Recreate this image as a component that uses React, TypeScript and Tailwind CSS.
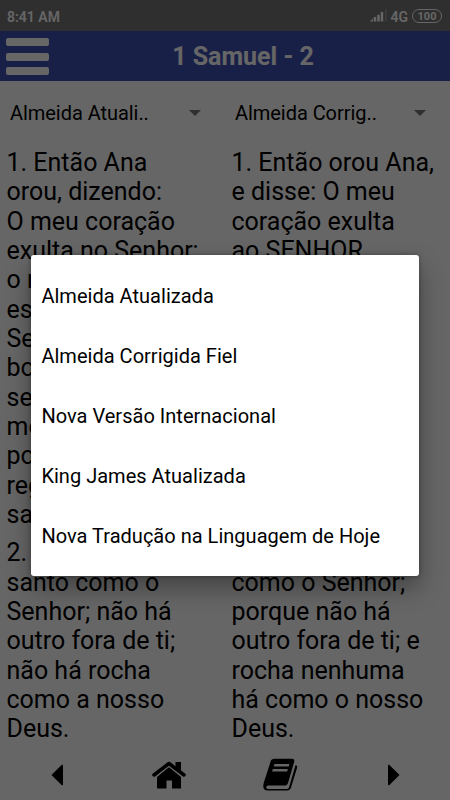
import React from "react";

const leftVerses = [
  ["1. Então Ana", "orou, dizendo:", "O meu coração", "exulta no Senhor;", "o meu poder", "está exaltado no", "Senhor; a minha", "boca dilata-", "se contra os", "meus inimigos,", "porquanto me", "regozijo na tua", "salvação."],
  ["2. Ninguém há", "santo como o", "Senhor; não há", "outro fora de ti;", "não há rocha", "como a nosso", "Deus."],
];

const rightVerses = [
  ["1. Então orou Ana,", "e disse: O meu", "coração exulta", "ao SENHOR,", "o meu poder", "está exaltado", "no SENHOR;", "a minha boca", "se dilatou", "sobre os meus", "inimigos,", "porquanto me", "alegro."],
  ["2. Não há santo", "como o Senhor;", "porque não há", "outro fora de ti; e", "rocha nenhuma", "há como o nosso", "Deus."],
];

const versions = [
  "Almeida Atualizada",
  "Almeida Corrigida Fiel",
  "Nova Versão Internacional",
  "King James Atualizada",
  "Nova Tradução na Linguagem de Hoje",
];

function StatusBar() {
  return (
    <div className="flex h-[31px] shrink-0 items-center justify-between bg-[#757575] pr-2 pl-[7px] text-white">
      <span className="pt-[2px] text-[14px] leading-4 font-semibold">8:41 AM</span>
      <div className="flex items-center">
        <svg width="18" height="13" viewBox="0 0 18 13" fill="currentColor">
          <path d="M0 12.5 2.8 9.5v3z" />
          <rect x="3.7" y="8" width="2.5" height="4.5" />
          <rect x="7.2" y="5.8" width="2.5" height="6.7" />
          <rect x="10.7" y="3" width="2.5" height="9.5" />
          <rect x="15" y="0" width="1.8" height="12.5" opacity="0.25" />
        </svg>
        <span className="ml-[2px] pt-[2px] text-[14px] leading-4 font-semibold">4G</span>
        <span className="ml-[4px] flex h-[14px] w-[30px] items-center justify-center rounded-full border border-white pt-[2px] text-[11px] leading-[12px] font-bold">
          100
        </span>
      </div>
    </div>
  );
}

function Header() {
  return (
    <header className="flex h-[50px] shrink-0 items-center bg-[#3f51b5] pl-[6px]">
      <div className="flex w-[43px] flex-col gap-[6.5px] pt-[1px]">
        <div className="h-[8px] rounded-[2px] bg-white" />
        <div className="h-[8px] rounded-[2px] bg-white" />
        <div className="h-[8px] rounded-[2px] bg-white" />
      </div>
      <h1 className="flex-1 pt-[1px] pr-[13px] text-center text-[25px] leading-[30px] font-bold text-white">1 Samuel - 2</h1>
    </header>
  );
}

function Column({ label, verses }: { label: string; verses: string[][] }) {
  return (
    <div className="w-[225px] overflow-hidden">
      <div className="flex h-[64px] items-center justify-between pr-6 pl-[10px] text-[20px]">
        <span className="tracking-[-0.05px]">{label}</span>
        <svg width="12" height="6" viewBox="0 0 12 6" fill="#757575">
          <path d="M0 0h12L6 6z" />
        </svg>
      </div>
      <div className="flex flex-col gap-[9px] pt-[3px] pl-[6.5px] text-[25px] leading-[29.33px] whitespace-nowrap">
        {verses.map((lines) => (
          <div key={lines[0]}>
            {lines.map((line) => (
              <div key={line}>{line}</div>
            ))}
          </div>
        ))}
      </div>
    </div>
  );
}

function BottomBar() {
  return (
    <nav className="flex h-[50px] shrink-0 items-center bg-white">
      <svg className="ml-[51px]" width="13" height="22" viewBox="0 0 13 22">
        <path d="M10.8.8.5 11 10.8 21.2q1.2.6 1.2-1V1.8q0-1.6-1.2-1z" />
      </svg>
      <svg className="ml-[88px]" width="34" height="28" viewBox="0 0 34 28">
        <path d="M23.5 1H29v11l-5.5-5z" />
        <path d="M2 14 17 2.5 32 14" fill="none" stroke="#000" strokeWidth="3.5" strokeLinecap="round" strokeLinejoin="round" />
        <path d="M17 6 29 16v11.5h-9v-8h-5.5v8H5V16z" />
        <path d="M4.5 15.3 17 5.6 29.5 15.3" fill="none" stroke="#fff" strokeWidth="0.9" />
      </svg>
      <svg className="mb-[1px] ml-[77px]" width="36" height="33" viewBox="0 0 36 33">
        <path d="M11.5.8H29q3 0 2.2 3L25 25q-.7 2.5-3 2.5H5q-2 0-1.7 2 .2 1.5 2 1.5H24q1.5 0 2-1.5L32.6 7q2.2.5 1.4 3l-6 19.5q-1 3-4 3H4.5Q1 32.5.3 29q-.2-2 .7-5L7.6 3.5q.8-2.7 3.9-2.7z" />
        <path d="M11.5 6h15l-.8 2.4h-15zm-1.6 5h15l-.8 2.5h-15z" fill="#fff" />
      </svg>
      <svg className="ml-[88px]" width="13" height="22" viewBox="0 0 13 22">
        <path d="M2.2.8 12.5 11 2.2 21.2q-1.2.6-1.2-1V1.8q0-1.6 1.2-1z" />
      </svg>
    </nav>
  );
}

export default function App() {
  return (
    <div className="relative flex h-[800px] w-[450px] flex-col overflow-hidden bg-white font-['Roboto',sans-serif] text-black">
      <StatusBar />
      <Header />
      <main className="flex h-[669px] shrink-0 overflow-hidden">
        <Column label="Almeida Atuali.." verses={leftVerses} />
        <Column label="Almeida Corrig.." verses={rightVerses} />
      </main>
      <BottomBar />
      <div className="absolute inset-0 flex flex-col items-center bg-black/60 pt-[255px]">
        <ul className="flex h-[321px] w-[388px] flex-col rounded-[3px] bg-white pt-[11px] pl-[10.4px] text-[20px] tracking-[0.02px] shadow-[0_12px_24px_rgba(0,0,0,0.35),0_0_5px_rgba(0,0,0,0.3)]">
          {versions.map((name) => (
            <li key={name} className="flex h-[60px] shrink-0 items-center whitespace-nowrap">
              {name}
            </li>
          ))}
        </ul>
      </div>
    </div>
  );
}
